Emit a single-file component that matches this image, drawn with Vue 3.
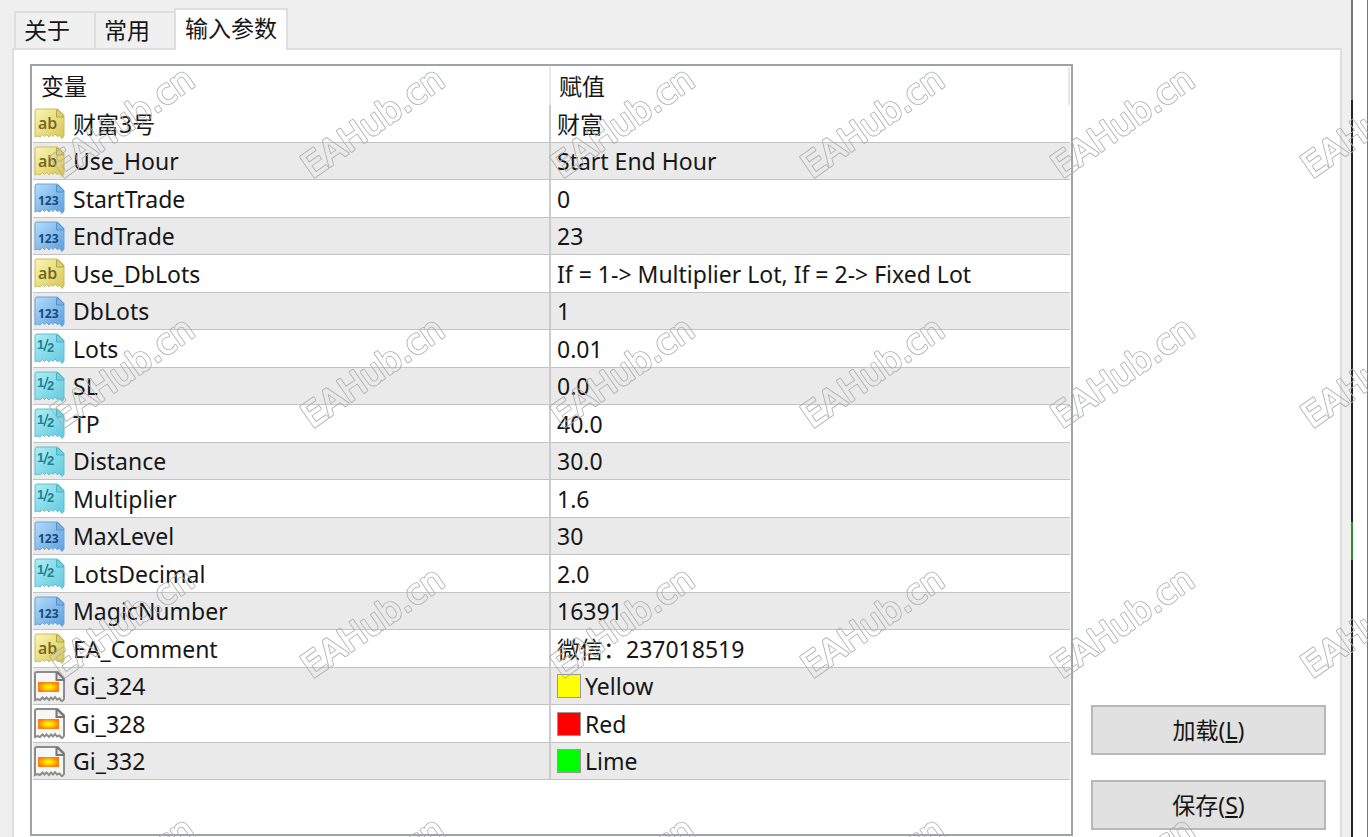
<script setup>
import { ref } from 'vue'

const tabs = ['关于', '常用', '输入参数']
const active = ref(2)

const rows = [
  { type: 'ab', name: '财富3号', value: '财富' },
  { type: 'ab', name: 'Use_Hour', value: 'Start End Hour' },
  { type: 'int', name: 'StartTrade', value: '0' },
  { type: 'int', name: 'EndTrade', value: '23' },
  { type: 'ab', name: 'Use_DbLots', value: 'If = 1-> Multiplier Lot, If = 2-> Fixed Lot' },
  { type: 'int', name: 'DbLots', value: '1' },
  { type: 'dbl', name: 'Lots', value: '0.01' },
  { type: 'dbl', name: 'SL', value: '0.0' },
  { type: 'dbl', name: 'TP', value: '40.0' },
  { type: 'dbl', name: 'Distance', value: '30.0' },
  { type: 'dbl', name: 'Multiplier', value: '1.6' },
  { type: 'int', name: 'MaxLevel', value: '30' },
  { type: 'dbl', name: 'LotsDecimal', value: '2.0' },
  { type: 'int', name: 'MagicNumber', value: '16391' },
  { type: 'ab', name: 'EA_Comment', value: '微信：237018519' },
  { type: 'color', name: 'Gi_324', value: 'Yellow', swatch: 'yellow' },
  { type: 'color', name: 'Gi_328', value: 'Red', swatch: 'red' },
  { type: 'color', name: 'Gi_332', value: 'Lime', swatch: 'lime' }
]

const actions = [
  { label: '加载', key: 'L' },
  { label: '保存', key: 'S' }
]
</script>

<template>
  <div class="screen">
    <main class="dialog">
      <div class="tabs" role="tablist">
        <button
          v-for="(tab, i) in tabs"
          :key="tab"
          type="button"
          role="tab"
          class="tab"
          :class="{ active: active === i }"
          :aria-selected="active === i"
          @click="active = i"
        >{{ tab }}</button>
      </div>

      <section class="panel">
        <div class="list">
          <table>
            <colgroup>
              <col class="col-name" />
              <col />
            </colgroup>
            <thead>
              <tr>
                <th scope="col">变量</th>
                <th scope="col">赋值</th>
              </tr>
            </thead>
            <tbody>
              <tr v-for="row in rows" :key="row.name">
                <td>
                  <div class="cell">
                    <svg class="icon" :class="row.type" viewBox="0 0 31 31" aria-hidden="true">
                      <path class="sheet" d="M3 1H23.500L30 7.500V28l-2 2.500-2.500-3-2.500 1-2-2.500-2 2.500-2-2-2 2.500-2.500-2.500-2 2-2-2-2.500 2.500L3.500 28 1 29V3Q1 1 3 1Z" />
                      <path class="fold" d="M22.500 2v7h7V7.500L24 2Z" />
                      <text v-if="row.type === 'ab'" x="4" y="21" class="glyph-ab">ab</text>
                      <text v-else-if="row.type === 'int'" x="4" y="22" class="glyph-int">123</text>
                      <template v-else-if="row.type === 'dbl'">
                        <text x="3" y="16" class="glyph-dbl">1</text>
                        <path class="slash" d="M14 6l-4 12" />
                        <text x="13" y="19" class="glyph-dbl">2</text>
                      </template>
                      <rect v-else x="4" y="11" width="21" height="10" fill="url(#ember)" />
                    </svg>
                    <span>{{ row.name }}</span>
                  </div>
                </td>
                <td>
                  <div class="cell value">
                    <span v-if="row.swatch" class="swatch" :class="row.swatch"></span>
                    <span>{{ row.value }}</span>
                  </div>
                </td>
              </tr>
            </tbody>
          </table>
        </div>

        <div class="actions">
          <button v-for="a in actions" :key="a.key" type="button" class="action">
            {{ a.label }}(<u>{{ a.key }}</u>)
          </button>
        </div>
      </section>
    </main>

    <div class="edge"><span class="edge-top"></span><span class="edge-mid"></span><span class="edge-green"></span><span class="edge-rest"></span></div>

    <svg class="watermark" aria-hidden="true">
      <defs>
        <radialGradient id="ember">
          <stop offset="0" stop-color="#ffff00" />
          <stop offset="0.4" stop-color="#ffd800" />
          <stop offset="1" stop-color="#ff7d0c" />
        </radialGradient>
        <linearGradient id="paper-ab" x2="1" y2="1">
          <stop offset="0" stop-color="#fbf6b4" /><stop offset="1" stop-color="#d6c653" />
        </linearGradient>
        <linearGradient id="paper-int" x2="1" y2="1">
          <stop offset="0" stop-color="#b4dcfb" /><stop offset="1" stop-color="#5c9fdc" />
        </linearGradient>
        <linearGradient id="paper-dbl" x2="1" y2="1">
          <stop offset="0" stop-color="#aeeef4" /><stop offset="1" stop-color="#62c8de" />
        </linearGradient>
        <pattern id="tile" width="250" height="250" patternUnits="userSpaceOnUse">
          <g class="mark" transform="translate(62 179) rotate(-35)">
            <text class="mark-outer">EAHub.cn</text>
            <text class="mark-inner">EAHub.cn</text>
          </g>
        </pattern>
        <mask id="marks" maskUnits="userSpaceOnUse" x="0" y="0" width="100%" height="100%">
          <rect width="100%" height="100%" fill="url(#tile)" />
        </mask>
      </defs>
      <rect width="100%" height="100%" fill="#aeaeae" mask="url(#marks)" />
    </svg>
  </div>
</template>

<style>
body {
  margin: 0;
  background: #efefef;
}
</style>

<style scoped>
.screen {
  position: relative;
  display: flex;
  min-height: 100vh;
  overflow: hidden;
  background: #efefef;
  color: #161616;
  font-family: "Noto Sans", "Noto Sans CJK SC", sans-serif;
  font-size: 23px;
  line-height: 30px;
}
.dialog {
  flex: 1;
  min-width: 0;
  display: flex;
  flex-direction: column;
  box-sizing: border-box;
  padding: 8px 9px 0 12px;
}
.tabs {
  display: flex;
  align-items: flex-end;
  height: 40px;
  padding-left: 2px;
}
.tab {
  box-sizing: border-box;
  width: 80px;
  height: 37px;
  margin: 0;
  padding: 0 8px 2px;
  border: 2px solid #dedede;
  border-width: 2px 0 0 2px;
  background: #f0f0f0;
  color: inherit;
  font: inherit;
  text-align: left;
  white-space: nowrap;
}
.tab.active {
  z-index: 1;
  width: 114px;
  height: 42px;
  margin-bottom: -2px;
  padding: 0 9px 4px;
  border-right-width: 2px;
  background: #fff;
}
.panel {
  flex: 1;
  display: flex;
  gap: 18px;
  padding: 14px 14px 1px 16px;
  border: 2px solid #dedede;
  border-bottom: 0;
  background: #fff;
}
.list {
  flex: 1;
  min-width: 0;
  box-sizing: border-box;
  padding: 1px;
  border: 2px solid #9da1ab;
}
table {
  width: 100%;
  table-layout: fixed;
  border-collapse: separate;
  border-spacing: 0;
}
.col-name {
  width: 518px;
}
th {
  box-sizing: border-box;
  height: 38px;
  padding: 0 8px;
  border-right: 2px solid #e8e8e8;
  font-weight: normal;
  text-align: left;
}
td {
  box-sizing: border-box;
  height: 37px;
  padding: 0;
  border-bottom: 1px solid #c3c3c3;
}
td:first-child {
  border-right: 2px solid #cccccc;
}
tr:nth-child(odd) td {
  height: 38px;
}
tr:nth-child(even) td {
  background: #eaeaea;
}
.cell {
  display: flex;
  align-items: center;
  gap: 8px;
  padding-left: 1px;
  white-space: nowrap;
}
.value {
  gap: 4px;
  padding-left: 6px;
}
.icon {
  width: 31px;
  height: 31px;
  flex: none;
}
.sheet {
  stroke-width: 1;
}
.ab .sheet { fill: url(#paper-ab); stroke: #c9bb60; }
.int .sheet { fill: url(#paper-int); stroke: #6aa2d6; }
.dbl .sheet { fill: url(#paper-dbl); stroke: #5fbfd0; }
.color .sheet { fill: #f7f7f7; stroke: #8c8c8c; stroke-width: 2; }
.ab .fold { fill: #ddd06a; stroke: #b3a444; }
.int .fold { fill: #79b4e8; stroke: #5590c8; }
.dbl .fold { fill: #6fd0df; stroke: #48b2c4; }
.color .fold { fill: #e4e4e4; stroke: #777777; stroke-width: 2; }
.glyph-ab {
  fill: #75651c;
  font: 600 16px "Open Sans", sans-serif;
}
.glyph-int {
  fill: #174a7e;
  font: bold 12px "Noto Sans", sans-serif;
}
.glyph-dbl {
  fill: #1f7f90;
  font: bold 13px "Liberation Sans", sans-serif;
}
.slash {
  fill: none;
  stroke: #1f7f90;
  stroke-width: 1.5;
}
.swatch {
  box-sizing: border-box;
  width: 24px;
  height: 24px;
  border: 1px solid #999999;
}
.yellow { background: #ffff00; }
.red { background: #ff0000; }
.lime { background: #00ff00; }
.actions {
  width: 235px;
  display: flex;
  flex-direction: column;
  justify-content: flex-end;
  gap: 25px;
  padding-bottom: 6px;
}
.action {
  height: 50px;
  margin: 0;
  padding: 0;
  border: 2px solid #b8b8b8;
  background: #e1e1e1;
  color: inherit;
  font: inherit;
}
.action u {
  text-underline-offset: 2px;
}
.edge {
  box-sizing: border-box;
  width: 17px;
  display: flex;
  flex-direction: column;
  border-right: 1px solid #777777;
  background: #fff;
}
.edge span {
  width: 2px;
}
.edge-top { height: 100px; background: #777777; }
.edge-mid { height: 422px; background: #222222; }
.edge-green { height: 38px; background: #2c8a34; }
.edge-rest { flex: 1; background: #222222; }
.watermark {
  position: absolute;
  inset: 0;
  z-index: 2;
  width: 100%;
  height: 100%;
  pointer-events: none;
}
.mark {
  font: 34px "DejaVu Sans", sans-serif;
  stroke-linejoin: round;
}
.mark-outer {
  fill: #fff;
  stroke: #fff;
  stroke-width: 2.6;
}
.mark-inner {
  fill: #000;
  stroke: #000;
  stroke-width: 1;
}
</style>
